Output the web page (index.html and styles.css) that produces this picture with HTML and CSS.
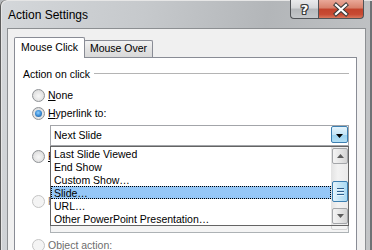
FILE: index.html
```html
<!DOCTYPE html>
<html>
<head>
<meta charset="utf-8">
<link rel="stylesheet" href="styles.css">
</head>
<body>
<div class="window">
  <div class="titlebar">
    <span class="title">Action Settings</span>
    <div class="caption-buttons">
      <div class="cap-btn help">?</div>
      <div class="cap-btn close">
        <svg width="44" height="17" viewBox="0 0 44 17">
          <path d="M17 4 L27 13 M27 4 L17 13" stroke="#3b3b3b" stroke-width="4.2" stroke-linecap="square" fill="none"/>
          <path d="M17 4 L27 13 M27 4 L17 13" stroke="#ffffff" stroke-width="2.2" stroke-linecap="square" fill="none"/>
        </svg>
      </div>
    </div>
  </div>
  <div class="dialog">
    <div class="tabs">
      <div class="tab active">Mouse Click</div>
      <div class="tab">Mouse Over</div>
    </div>
    <div class="panel">
      <div class="group-title"><span>Action on click</span><span class="rule"></span></div>
      <div class="options">
        <div class="radio-row"><span class="radio"></span><span><u>N</u>one</span></div>
        <div class="radio-row"><span class="radio checked"></span><span><u>H</u>yperlink to:</span></div>
        <div class="combo">
          <span class="combo-text">Next Slide</span>
          <span class="combo-btn">
            <svg width="7" height="4" viewBox="0 0 7 4"><path d="M0 0 H7 L3.5 4 Z" fill="#000"/></svg>
          </span>
          <div class="dropdown">
            <div class="items">
              <div class="item">Last Slide Viewed</div>
              <div class="item">End Show</div>
              <div class="item">Custom Show…</div>
              <div class="item selected">Slide…</div>
              <div class="item">URL…</div>
              <div class="item">Other PowerPoint Presentation…</div>
            </div>
            <div class="scrollbar">
              <div class="sb-btn"><svg width="7" height="4" viewBox="0 0 7 4"><path d="M0 4 H7 L3.5 0 Z" fill="#5c5c5c"/></svg></div>
              <div class="sb-track">
                <div class="sb-thumb"><span></span><span></span><span></span></div>
              </div>
              <div class="sb-btn"><svg width="7" height="4" viewBox="0 0 7 4"><path d="M0 0 H7 L3.5 4 Z" fill="#5c5c5c"/></svg></div>
            </div>
          </div>
        </div>
        <div class="radio-row run-program"><span class="radio"></span><span><u>R</u>un program:</span></div>
        <div class="textbox"></div>
        <div class="radio-row disabled"><span class="radio"></span><span>Run <u>m</u>acro:</span></div>
        <div class="combo disabled"><span class="combo-btn"></span></div>
        <div class="radio-row disabled"><span class="radio"></span><span><u>O</u>bject action:</span></div>
      </div>
    </div>
  </div>
</div>
</body>
</html>
```
FILE: styles.css
```css
html, body {
  margin: 0;
  padding: 0;
  overflow: hidden;
  background: #b8bbbe;
}

.window {
  width: 372px;
  height: 250px;
  box-sizing: border-box;
  padding: 0 6px 0 7px;
  display: flex;
  flex-direction: column;
  overflow: hidden;
  border-top-left-radius: 6px;
  background: linear-gradient(100deg, #d4d7da 0%, #c6c9cc 35%, #b3b6b9 65%, #c3c5c7 100%);
  box-shadow: inset 1px 0 #5c5c5c, inset 2px 1px #e6e6e6, inset -2px 0 #6f7275;
  font-family: "Liberation Sans", Arial, sans-serif;
}

.titlebar {
  height: 28px;
  flex: none;
  display: flex;
  align-items: flex-start;
  justify-content: space-between;
}

.title {
  margin: 8px 0 0 1px;
  font-size: 12px;
  line-height: 14px;
  color: #000;
}

.caption-buttons {
  display: flex;
  margin-right: 2px;
}

.cap-btn {
  height: 19px;
  box-sizing: border-box;
  border: 1px solid #505357;
  border-top: none;
  display: flex;
  align-items: center;
  justify-content: center;
}

.help {
  width: 28px;
  border-right: none;
  border-bottom-left-radius: 4px;
  background: linear-gradient(#eaebec 0%, #d5d7d9 45%, #b5b8bb 50%, #c4c7ca 100%);
  color: #fff;
  font-family: "DejaVu Sans", sans-serif;
  font-weight: bold;
  font-size: 13px;
  line-height: 17px;
  text-shadow: 1px 0 #3b3b3b, -1px 0 #3b3b3b, 0 1px #3b3b3b, 0 -1px #3b3b3b, 1px 1px #3b3b3b, -1px -1px #3b3b3b, 1px -1px #3b3b3b, -1px 1px #3b3b3b;
}

.close {
  width: 46px;
  border-bottom-right-radius: 4px;
  background: linear-gradient(#e9a898 0%, #d7806b 45%, #c2432c 50%, #c84a33 80%, #d9775d 100%);
}

.close svg { display: block; }

.dialog {
  flex: 1;
  display: flex;
  flex-direction: column;
  background: #f0f0f0;
  border: 1px solid #8c8f92;
  border-bottom: none;
  padding: 8px 8px 0 6px;
}

.tabs {
  height: 20px;
  display: flex;
  align-items: flex-end;
  font-size: 10.5px;
}

.tab {
  box-sizing: border-box;
  height: 17px;
  width: 69px;
  margin-left: -1px;
  border: 1px solid #898c95;
  border-bottom: none;
  border-radius: 2px 2px 0 0;
  background: linear-gradient(#f3f3f3, #e3e3e3 50%, #d9d9d9);
  text-align: center;
  line-height: 15px;
  color: #000;
}

.tab.active {
  margin-left: 0;
  width: 71px;
  height: 21px;
  margin-bottom: -1px;
  line-height: 19px;
  background: #fff;
  position: relative;
  z-index: 1;
}

.panel {
  flex: 1;
  background: #fff;
  border: 1px solid #898c95;
  border-bottom: none;
  padding: 9px 7px 0 8px;
  font-size: 10.5px;
  color: #000;
}

.group-title {
  display: flex;
  align-items: center;
  gap: 4px;
  height: 14px;
  line-height: 14px;
}

.rule {
  flex: 1;
  height: 1px;
  background: #b4b4b4;
  margin-top: -1px;
}

.options {
  display: flex;
  flex-direction: column;
  margin: 5px 0 0 9px;
}

.radio-row {
  height: 18px;
  display: flex;
  align-items: center;
  gap: 3px;
  line-height: 14px;
}

.radio {
  width: 13px;
  height: 13px;
  box-sizing: border-box;
  border-radius: 50%;
  border: 1px solid #8f9296;
  background: radial-gradient(circle at 50% 55%, #f7f7f7 0%, #e4e4e4 55%, #cfcfcf 100%);
  display: flex;
  align-items: center;
  justify-content: center;
}

.radio.checked::after {
  content: "";
  width: 7px;
  height: 7px;
  border-radius: 50%;
  background: radial-gradient(circle at 45% 40%, #8fd0ff 0%, #3a8cd6 50%, #1b4f86 100%);
}

.disabled { color: #6d6d6d; }

.radio-row.disabled .radio {
  border-color: #c4c4c4;
  background: #f4f4f4;
}

.combo {
  position: relative;
  height: 21px;
  margin: 3px 0 0 18px;
  box-sizing: border-box;
  border: 1px solid #a3a5a9;
  background: #fff;
  display: flex;
  align-items: flex-start;
  justify-content: space-between;
}

.combo-text {
  padding-left: 3px;
  line-height: 18px;
}

.combo-btn {
  width: 17px;
  height: 17px;
  box-sizing: border-box;
  border: 1px solid #3c7fb1;
  border-radius: 2px;
  background: linear-gradient(#e5f4fc 0%, #c4e5f6 50%, #98d1ef 51%, #b5e0f5 100%);
  display: flex;
  align-items: center;
  justify-content: center;
  padding-top: 3px;
}

.dropdown {
  position: absolute;
  top: 20px;
  left: -1px;
  right: -1px;
  height: 80px;
  box-sizing: border-box;
  border: 1px solid #646464;
  background: #fff;
  display: flex;
  z-index: 5;
}

.items {
  flex: 1;
  display: flex;
  flex-direction: column;
}

.item {
  height: 13px;
  line-height: 13px;
  padding-left: 2px;
  box-sizing: border-box;
  border: 1px solid transparent;
  white-space: nowrap;
}

.item.selected {
  background: #95c7f7;
  border: 1px dotted #000;
}

.scrollbar {
  width: 17px;
  display: flex;
  flex-direction: column;
  padding: 1px 0 1px 1px;
  box-sizing: border-box;
  background: linear-gradient(90deg, #e3e3e3, #f2f2f2 40%, #eaeaea);
}

.sb-btn {
  height: 16px;
  box-sizing: border-box;
  border: 1px solid #a4a6a9;
  border-radius: 2px;
  background: linear-gradient(90deg, #f4f4f4, #e6e6e6 50%, #d4d4d4);
  display: flex;
  align-items: center;
  justify-content: center;
}

.sb-track {
  flex: 1;
  display: flex;
  flex-direction: column;
}

.sb-thumb {
  margin-top: 17px;
  height: 21px;
  box-sizing: border-box;
  border: 1px solid #3c7fb1;
  border-radius: 2px;
  background: linear-gradient(90deg, #e5f4fc, #c4e5f6 50%, #a8daf5);
  display: flex;
  flex-direction: column;
  align-items: center;
  justify-content: center;
  gap: 2px;
}

.sb-thumb span {
  width: 7px;
  height: 1px;
  background: #2f5e8c;
  box-shadow: 0 1px #e8f6fd;
}

.textbox {
  height: 21px;
  margin: 2px 0 0 18px;
  box-sizing: border-box;
  border: 1px solid #a3a5a9;
  background: #fff;
}

.radio-row.run-program { margin-top: 1px; }

.textbox + .radio-row { margin-top: 4px; }

.combo.disabled {
  margin-top: 2px;
  border-color: #adb2b5;
  background: #f4f4f4;
  justify-content: flex-end;
}

.combo.disabled .combo-btn {
  border-color: #d5d5d5;
  background: #f4f4f4;
}

.combo.disabled + .radio-row { margin-top: 3px; }
```
